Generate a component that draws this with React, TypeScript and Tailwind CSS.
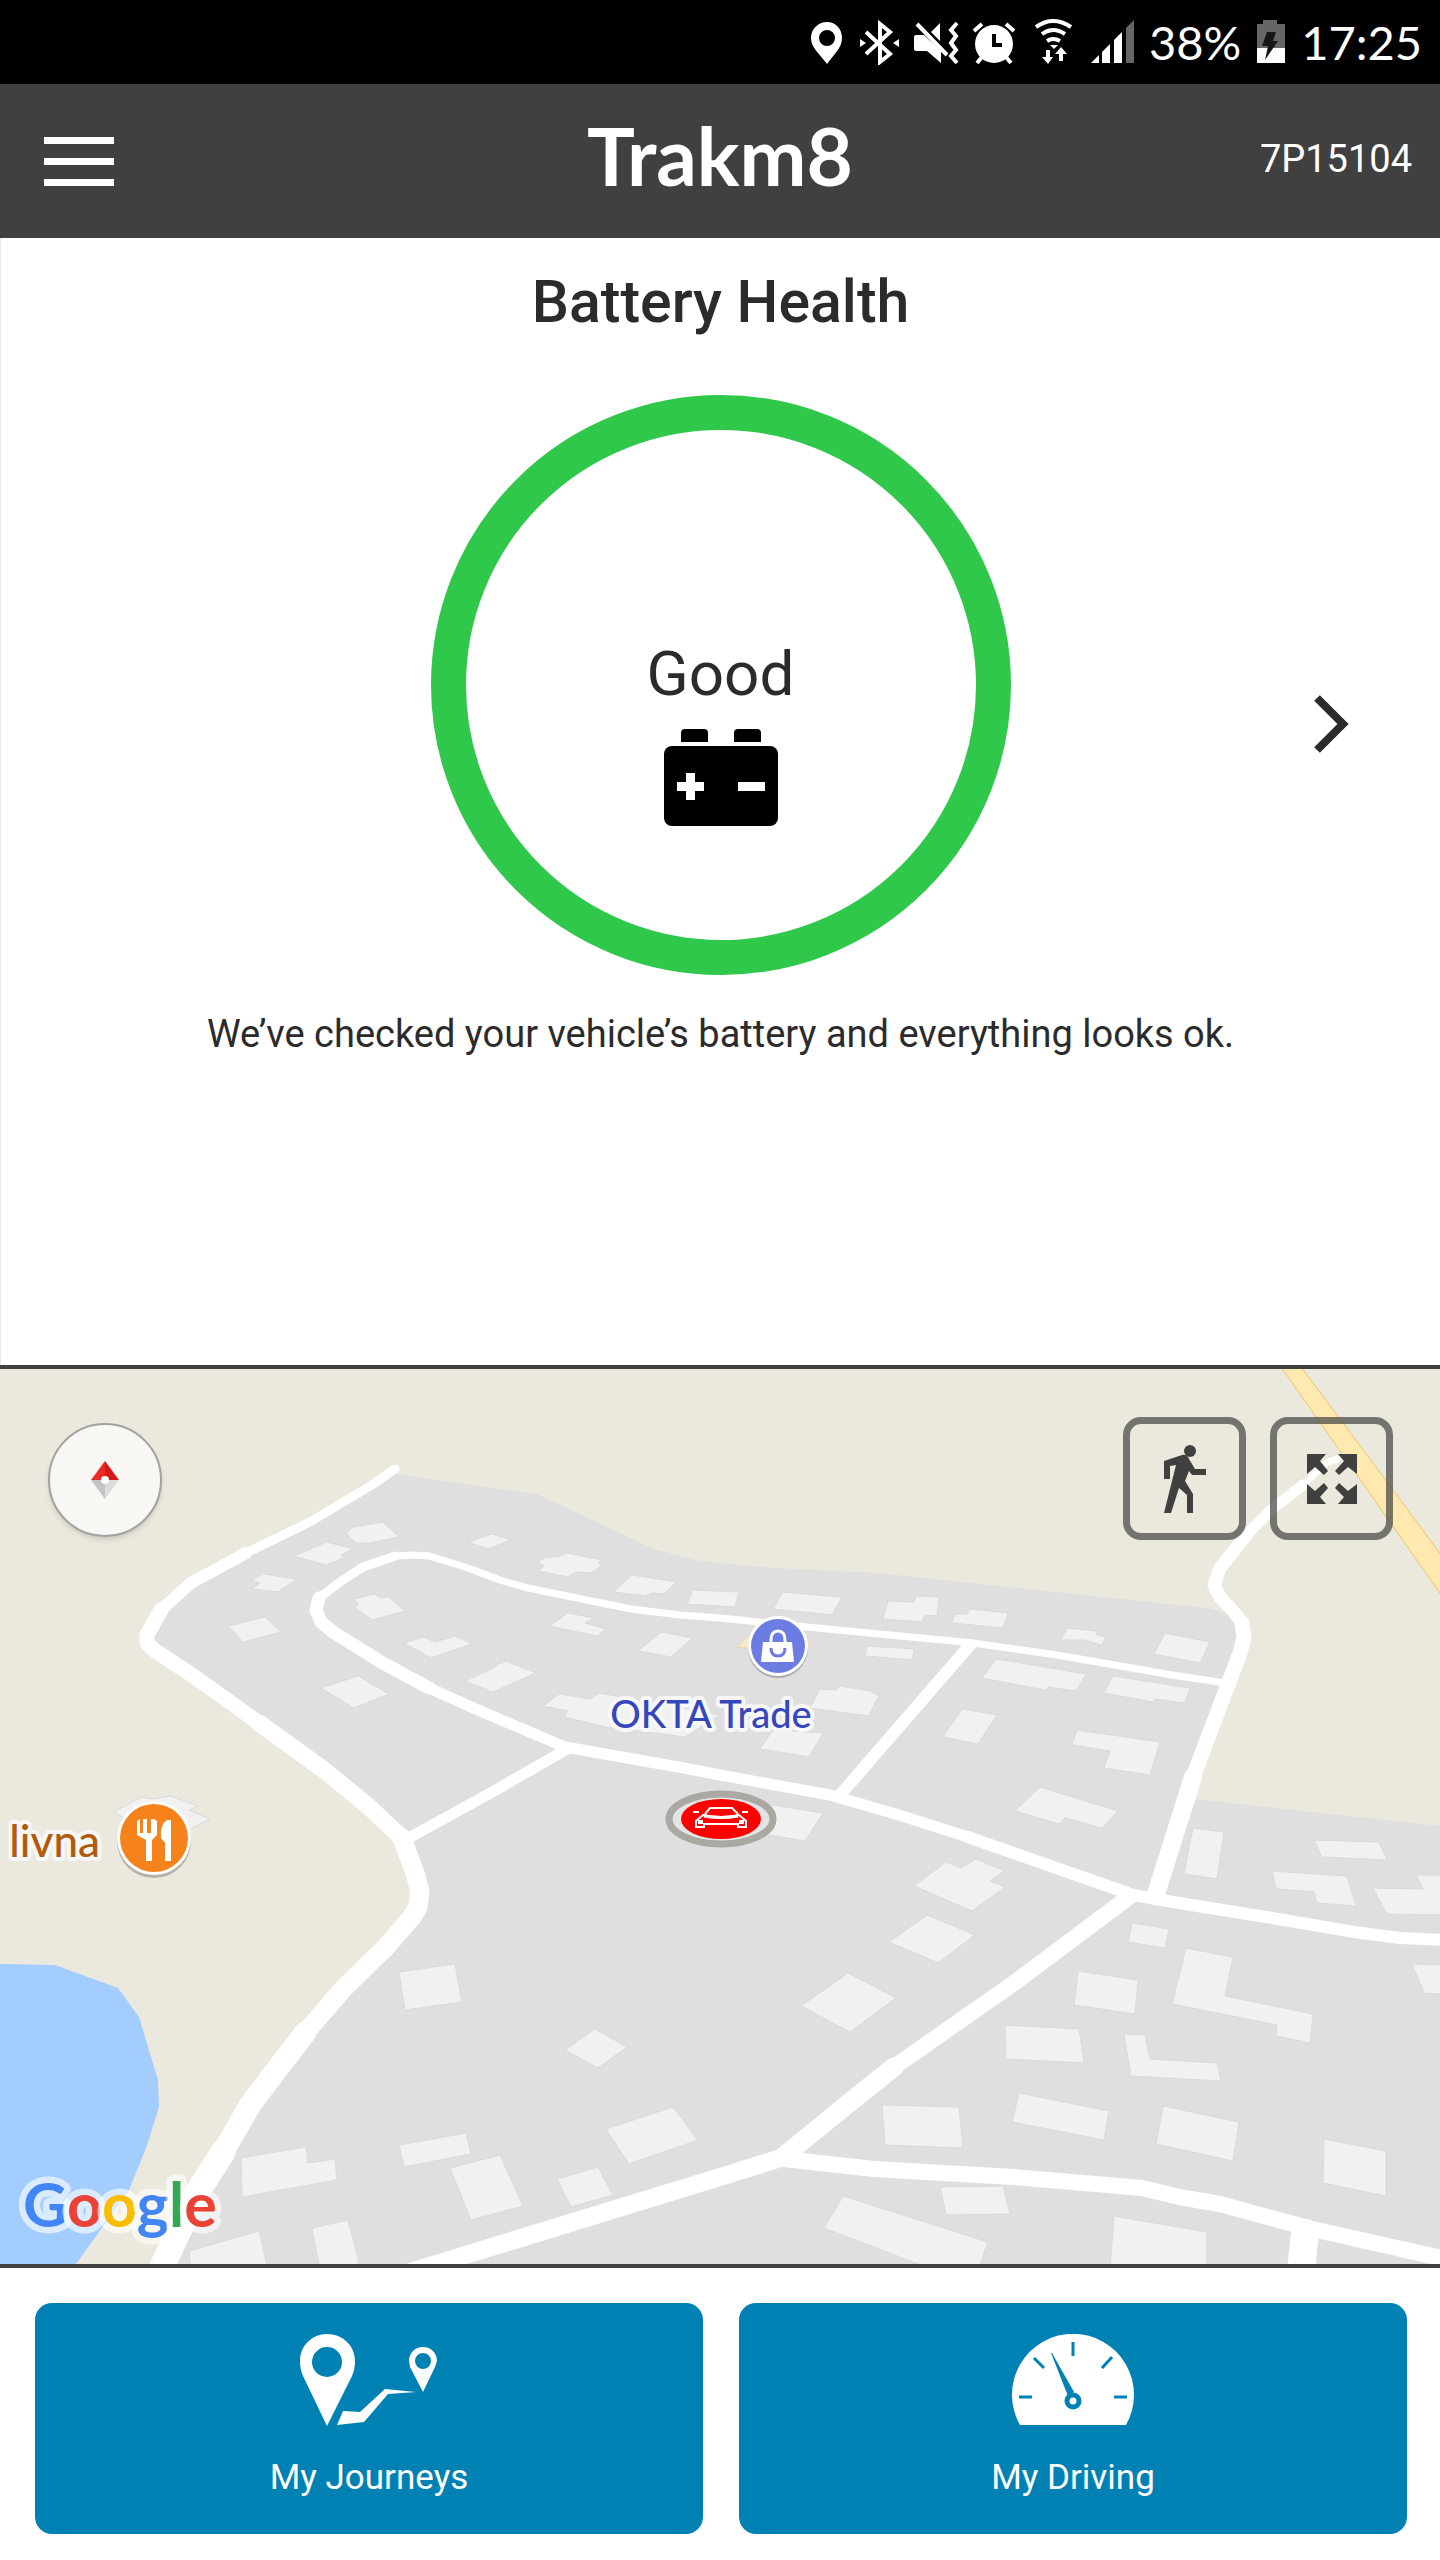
import type { ReactNode } from "react";

/* ── Map data ── */
const LAND =
  "395,1474 537,1494 654,1549 700,1561 720,1563 775,1568 878,1573 1207,1608 1230,1614 1244,1637 1229,1685 1195,1799 1440,1826 1440,2270 161,2270 197,2193 223,2152 250,2105 275,2072 305,2033 344,1988 386,1947 412,1917 420,1892 415,1873 402,1838 367,1805 324,1770 259,1723 195,1677 154,1650 147,1635 161,1610 191,1583 246,1553 310,1522 372,1485";

const LAKE =
  "0,1964 55,1965 118,1988 139,2017 158,2080 159,2107 146,2148 129,2190 99,2232 76,2264 76,2270 0,2270";

const BUILDINGS = [
  "346,1533 353,1527 383,1522 399,1537 370,1543 356,1543",
  "294,1556 327,1542 353,1549 341,1555 345,1557 326,1565",
  "252,1580 263,1574 297,1579 278,1592 252,1589 260,1583",
  "228,1626 265,1617 281,1632 243,1642",
  "354,1599 374,1594 381,1598 389,1597 405,1611 372,1620 354,1607 359,1605",
  "468,1542 492,1534 511,1540 488,1549",
  "538,1571 544,1566 539,1561 546,1557 558,1557 567,1553 601,1560 598,1563 602,1565 591,1573 576,1572 568,1577",
  "613,1592 632,1575 676,1582 664,1594 652,1593 645,1596",
  "687,1604 693,1590 739,1592 735,1607",
  "549,1626 568,1613 594,1618 585,1623 606,1629 597,1636",
  "638,1651 661,1632 692,1638 671,1657",
  "404,1643 423,1637 435,1642 455,1636 472,1644 431,1658",
  "465,1681 497,1666 497,1665 506,1661 536,1673 493,1692",
  "321,1688 358,1676 389,1694 354,1708",
  "543,1706 559,1694 590,1699 599,1693 640,1700 720,1715 685,1737 606,1727 564,1717 568,1711",
  "760,1749 773,1730 823,1733 809,1757",
  "114,1812 141,1797 152,1799 171,1796 198,1806 189,1810 210,1819 190,1829 160,1840",
  "783,1592 842,1597 832,1615 773,1609",
  "888,1601 914,1602 916,1596 939,1597 937,1616 925,1615 922,1622 883,1619",
  "955,1614 967,1614 970,1609 1008,1613 1003,1628 952,1623",
  "1067,1628 1096,1631 1097,1635 1106,1637 1102,1645 1084,1640 1061,1640",
  "1165,1633 1210,1642 1200,1663 1154,1654",
  "867,1646 914,1649 912,1660 865,1656",
  "996,1659 1086,1674 1076,1691 1048,1687 1045,1690 982,1678",
  "1113,1676 1190,1688 1185,1703 1155,1699 1153,1702 1104,1693",
  "820,1689 836,1690 839,1686 870,1691 879,1696 868,1716 810,1708",
  "962,1709 997,1715 978,1744 943,1737",
  "1077,1730 1160,1742 1150,1775 1104,1768 1110,1751 1072,1745",
  "1040,1787 1118,1811 1102,1828 1065,1818 1059,1824 1015,1811",
  "766,1804 823,1813 805,1841 768,1835",
  "1193,1828 1224,1832 1217,1879 1184,1874",
  "1314,1840 1379,1842 1387,1860 1322,1857",
  "1272,1871 1347,1876 1356,1906 1317,1903 1314,1892 1276,1889",
  "1373,1888 1423,1889 1416,1875 1441,1875 1441,1915 1387,1914",
  "914,1886 946,1862 961,1868 976,1859 1004,1871 990,1881 1005,1887 972,1911",
  "927,1915 975,1935 938,1963 889,1942",
  "848,1973 896,1998 850,2032 801,2006",
  "1132,1923 1169,1929 1165,1948 1128,1942",
  "1186,1948 1233,1957 1225,1996 1313,2014 1310,2043 1276,2036 1277,2025 1172,2004",
  "1078,1971 1138,1980 1135,2014 1074,2005",
  "1412,1964 1441,1965 1441,1994 1424,1993",
  "1005,2025 1079,2029 1084,2063 1006,2059",
  "1124,2034 1145,2035 1150,2059 1217,2063 1221,2081 1131,2076",
  "882,2105 959,2107 963,2148 885,2145",
  "1019,2093 1109,2111 1104,2140 1012,2122",
  "1163,2106 1239,2122 1233,2161 1156,2144",
  "1324,2139 1386,2151 1386,2196 1323,2183",
  "940,2187 1003,2186 1010,2214 946,2215",
  "843,2196 988,2242 978,2270 934,2270 824,2228",
  "1114,2216 1207,2232 1207,2270 1110,2270",
  "399,1972 455,1964 462,2002 405,2010",
  "595,2029 627,2047 598,2068 565,2050",
  "606,2129 673,2107 698,2140 629,2164",
  "399,2145 466,2133 471,2154 404,2167",
  "450,2168 500,2155 523,2206 471,2220",
  "557,2179 598,2167 613,2195 571,2207",
  "241,2158 306,2147 308,2163 335,2159 337,2180 242,2197",
  "189,2251 259,2231 268,2270 191,2270",
  "312,2228 348,2220 359,2262 350,2270 320,2270",
];

// roads get wider towards the viewer
const ROADS: { width: number; points: string }[] = [
  { width: 9, points: "395,1469 372,1485 310,1522 246,1553" },
  { width: 12, points: "246,1553 191,1583 161,1610" },
  { width: 15, points: "161,1610 147,1635 147,1643 154,1650 195,1677 259,1723" },
  { width: 17, points: "259,1723 324,1770 367,1805 402,1838" },
  { width: 19, points: "402,1838 415,1873 420,1892 418,1907 412,1917 386,1947 344,1988 305,2033" },
  { width: 22, points: "305,2033 275,2072 250,2105 223,2152" },
  { width: 25, points: "223,2152 197,2193 158,2275" },
  { width: 7, points: "1225,1683 1172,1675 1057,1655 973,1643 807,1627 720,1618 680,1615 631,1609 528,1588 500,1580 468,1568 429,1556 413,1555 395,1556" },
  { width: 9, points: "395,1556 363,1567 340,1582 319,1598" },
  { width: 13, points: "319,1598 316,1610 321,1622 333,1632 381,1662 429,1688" },
  { width: 11, points: "429,1688 478,1710 565,1747 684,1768 720,1775 830,1795 899,1815 968,1837" },
  { width: 12, points: "968,1837 1119,1890 1133,1895 1179,1903 1266,1917 1354,1932 1400,1938 1445,1940" },
  { width: 11, points: "569,1748 487,1795 405,1840" },
  { width: 12, points: "970,1645 840,1795" },
  { width: 7, points: "1337,1459 1326,1463 1303,1485" },
  { width: 11, points: "1303,1485 1271,1510 1248,1533" },
  { width: 13, points: "1248,1533 1220,1568 1214,1585 1220,1597 1234,1612 1242,1623" },
  { width: 15, points: "1242,1623 1244,1637 1240,1653 1228,1685 1193,1777" },
  { width: 18, points: "1193,1777 1174,1837 1156,1894" },
  { width: 16, points: "1129,1897 1014,1983 894,2067" },
  { width: 19, points: "894,2067 849,2103 784,2156" },
  { width: 18, points: "784,2157 720,2177 410,2272" },
  { width: 16, points: "784,2159 874,2169 1014,2177 1142,2188 1179,2197 1220,2204 1308,2228 1450,2260" },
  { width: 28, points: "1305,2233 1300,2280" },
];

const GOOGLE: [string, string][] = [
  ["G", "#4285f4"],
  ["o", "#ea4335"],
  ["o", "#fbbc05"],
  ["g", "#4285f4"],
  ["l", "#34a853"],
  ["e", "#ea4335"],
];

/* ── Status bar ── */
function StatusBar() {
  return (
    <div className="flex h-[84px] items-center justify-end gap-3 bg-black pr-[18px] font-['Lato',sans-serif] text-[47px] leading-none text-white">
      <svg className="h-[46px] w-9" viewBox="810 19 36 46" fill="currentColor" aria-label="Location">
        <path fillRule="evenodd" d="M828 22c-9 0-16 7-16 16 0 10 9 16 16 26 7-10 15-16 15-26 0-9-6-16-15-16zm0 8a8 8 0 1 1 0 16 8 8 0 0 1 0-16z" />
      </svg>
      <svg className="h-[46px] w-11" viewBox="858 19 44 46" fill="none" stroke="currentColor" strokeWidth="4" aria-label="Bluetooth">
        <path d="M867 32 891 54 881 62V24L891 32 867 54" />
        <path d="M861 39l6 4-6 4zM900 39l-6 4 6 4z" fill="currentColor" stroke="none" />
      </svg>
      <svg className="h-[46px] w-[46px]" viewBox="914 19 46 46" fill="currentColor" aria-label="Muted">
        <path d="M917 35h8l17 16v12l-14-12h-11q-2 0-2-2V37q0-2 2-2zM941 23v18l-9-9z" />
        <path d="M918 24 948 55" stroke="currentColor" strokeWidth="4" />
        <path d="M958 23l-6 7 5 6-5 7 5 7-5 6 6 7" fill="none" stroke="currentColor" strokeWidth="4" />
      </svg>
      <svg className="h-[46px] w-[46px]" viewBox="972 19 46 46" aria-label="Alarm">
        <circle cx="995" cy="44" r="19" fill="currentColor" />
        <path d="M975 31l8-7M1015 31l-8-7M983 57l-5 6M1007 57l5 6" stroke="currentColor" strokeWidth="4" />
        <path d="M995 34v11h8" fill="none" stroke="black" strokeWidth="4" />
      </svg>
      <svg className="h-[46px] w-12" viewBox="1034 19 48 46" fill="none" stroke="currentColor" strokeWidth="4" aria-label="Wi-Fi">
        <path d="M1041 27q17-12 35 0M1047 34q11-8 23 0M1052 41q6-4 13 0" />
        <path d="M1055 45l4 4 4-4z" fill="currentColor" stroke="none" />
        <path d="M1053 50v10M1066 61V51" />
        <path d="M1047 57h11l-5 7zM1060 54h12l-6-7z" fill="currentColor" stroke="none" />
      </svg>
      <svg className="h-[46px] w-12" viewBox="1089 19 48 46" fill="currentColor" aria-label="Signal">
        <path d="M1091 63l8-8v8zM1102 52l8-8v19h-8zM1114 40l8-8v31h-8z" />
        <path d="M1126 28l8-8v43h-8z" fill="#666" />
      </svg>
      <span>38%</span>
      <svg className="mx-1 h-[46px] w-7" viewBox="1261 19 28 46" aria-label="Charging">
        <path d="M1267 20h14v4h8v25h-28V24h6z" fill="#666" />
        <path d="M1261 48h28v15h-28z" fill="white" />
        <path d="M1271 32h9l-3 9h5l-13 19 3-14h-6z" fill="#161616" />
      </svg>
      <span>17:25</span>
    </div>
  );
}

function Header() {
  return (
    <header className="grid h-[154px] grid-cols-[1fr_auto_1fr] items-center bg-[#404040] px-7 text-white">
      <button type="button" aria-label="Menu" className="ml-4 flex w-[70px] flex-col gap-[14px]">
        <span className="h-[7px] bg-white" />
        <span className="h-[7px] bg-white" />
        <span className="h-[7px] bg-white" />
      </button>
      <div className="pb-3 font-['Lato',sans-serif] text-[80px] leading-none font-bold">Trakm8</div>
      <div className="pb-1 text-right text-[38px] leading-none">7P15104</div>
    </header>
  );
}

/* ── Battery health ── */
function BatteryIcon() {
  return (
    <svg className="h-[98px] w-[114px]" viewBox="663 729 114 98" aria-hidden="true">
      <path d="M680 743v-9q0-4 4-4h19q4 0 4 4v9zM733 743v-9q0-4 4-4h19q4 0 4 4v9z" />
      <rect x="663" y="747" width="114" height="80" rx="8" />
      <path d="M676 783h9v-9h9v9h9v9h-9v9h-9v-9h-9zM737 783h27v9h-27z" fill="white" />
    </svg>
  );
}

function BatteryHealth() {
  return (
    <section className="flex flex-1 flex-col items-center border-l border-[#e8e8e8] pt-7 pb-10 text-center text-[#2b2b2b]">
      <h1 className="text-[59px] leading-[72px] font-medium">Battery Health</h1>
      <div className="mt-[57px] grid w-full grid-cols-[1fr_auto_1fr]">
        <div />
        <div className="flex size-[580px] flex-col items-center rounded-full border-[35px] border-[#30c84b] pt-[208px]">
          <p className="text-[62px] leading-[72px]">Good</p>
          <div className="mt-[18px]">
            <BatteryIcon />
          </div>
        </div>
        <div className="flex items-center justify-end pt-[78px] pr-[91px]">
          <button type="button" aria-label="Next">
            <svg className="h-[60px] w-9" viewBox="0 0 36 60" fill="none" stroke="currentColor" strokeWidth="8">
              <path d="M4 4 30 30 4 56" />
            </svg>
          </button>
        </div>
      </div>
      <p className="mt-[35px] text-[38px] leading-[48px]">
        We’ve checked your vehicle’s battery and everything looks ok.
      </p>
    </section>
  );
}

/* ── Map ── */
function MapCanvas() {
  return (
    <svg className="h-full w-full" viewBox="0 1369 1440 895" preserveAspectRatio="xMidYMid slice">
      <rect y="1369" width="1440" height="895" fill="#ebe9dd" />
      <polygon points={LAKE} fill="#a3ccff" />
      <polygon points={LAND} fill="#dfdfdf" />
      <polygon points="1281,1367 1301,1367 1364,1451 1442,1556 1442,1596 1345,1458" fill="#ffe9af" stroke="#e8c76c" />
      <g fill="#f1f1f1" stroke="#dadada">
        {BUILDINGS.map((points) => (
          <polygon key={points} points={points} />
        ))}
      </g>
      <polygon points="737,1647 748,1636 800,1636 811,1644 800,1652" fill="#fae8cc" stroke="#f0d5a6" />
      <g fill="none" stroke="white" strokeLinejoin="round" strokeLinecap="round">
        {ROADS.map((road) => (
          <polyline key={road.points} points={road.points} strokeWidth={road.width} />
        ))}
      </g>

      {/* Shop */}
      <circle cx="778" cy="1648" r="30" fill="#a9a9a9" />
      <circle cx="778" cy="1646" r="30" fill="white" />
      <circle cx="778" cy="1646" r="27" fill="#6c7ce3" />
      <path d="M763 1642h29l2 20h-33z" fill="white" />
      <path d="M771 1644v-4q0-9 7-9t7 9v4" fill="none" stroke="white" strokeWidth="3" />
      <path d="M771 1648q0 8 7 8t7-8" fill="none" stroke="#6c7ce3" strokeWidth="3" />

      {/* Restaurant */}
      <circle cx="154" cy="1841" r="37" fill="#b3b1aa" />
      <circle cx="154" cy="1838" r="37" fill="white" />
      <circle cx="154" cy="1838" r="34" fill="#f5821b" />
      <path d="M137 1821l3-2v14h3v-14h4v14h4v-14l3 0v0l3 2v14l-5 5v21h-6v-21l-9-5zM171 1861h-6v-18l-4-5q-1-14 6-18h4z" fill="white" />

      {/* Labels */}
      <g className="font-['Lato',sans-serif] font-medium" stroke="#f7f7f7" strokeWidth="8" strokeLinejoin="round" paintOrder="stroke">
        <text x="711" y="1728" fontSize="38" textAnchor="middle" fill="#3547bb">
          OKTA Trade
        </text>
        <text x="100" y="1857" fontSize="44" textAnchor="end" fill="#b25a0c">
          livna
        </text>
      </g>
      <text
        x="23"
        y="2227"
        fontSize="61"
        className="font-['Lato',sans-serif] font-bold"
        stroke="white"
        strokeOpacity="0.6"
        strokeWidth="13"
        strokeLinejoin="round"
        paintOrder="stroke"
      >
        {GOOGLE.map(([letter, color], i) => (
          <tspan key={i} fill={color}>
            {letter}
          </tspan>
        ))}
      </text>

      {/* Vehicle */}
      <ellipse cx="721" cy="1819" rx="52" ry="25" fill="#e4e4e4" stroke="#a9a8a3" strokeWidth="7" />
      <ellipse cx="721" cy="1819" rx="40" ry="20" fill="#ff0000" />
      <g fill="none" stroke="white" strokeWidth="2">
        <path d="M705 1814l5-6h22l6 6" />
        <path d="M693 1812h6M742 1812h6" />
        <path d="M703 1815q18 4 36 0l7 6v6h-8v-3h-34v3h-8v-6z" />
        <path d="M704 1816q17 3 34 0" strokeWidth="3" />
        <path d="M698 1822h5M739 1822h5" strokeWidth="4" />
      </g>
    </svg>
  );
}

function MapButton({ label, children }: { label: string; children: ReactNode }) {
  return (
    <button
      type="button"
      aria-label={label}
      className="flex size-[123px] items-center justify-center rounded-[18px] border-[7px] border-[#404040]/70"
    >
      {children}
    </button>
  );
}

function VehicleMap() {
  return (
    <section className="relative h-[903px] overflow-hidden border-y-4 border-[#404040]">
      <MapCanvas />
      <button
        type="button"
        aria-label="Compass"
        className="absolute top-[54px] left-12 flex size-[114px] items-center justify-center rounded-full border-2 border-[#a2a2a0] bg-[#f8f7f3] shadow-md"
      >
        <svg className="h-[38px] w-7" viewBox="0 0 28 38">
          <path d="M14 0v19H0z" fill="#ea2a24" />
          <path d="M14 0v19h14z" fill="#d41a16" />
          <path d="M14 38V19H0z" fill="#c4c4c4" />
          <path d="M14 38V19h14z" fill="#dcdcdc" />
          <circle cx="14" cy="19" r="4" fill="white" />
        </svg>
      </button>
      <div className="absolute top-12 right-[47px] flex gap-6 text-[#404040]">
        <MapButton label="Walk to vehicle">
          <svg className="h-[70px] w-[42px]" viewBox="0 0 42 70" fill="currentColor">
            <circle cx="26" cy="7" r="6" />
            <path d="M0 17 18 11q5-1 7 4l6 10h11v6H28l-3-4-4 10 8 13v19h-6V51l-8-7L7 69H0l12-48-6 1v13H0z" />
          </svg>
        </MapButton>
        <MapButton label="Full screen">
          <svg className="size-[50px]" viewBox="0 0 50 50" fill="currentColor">
            <path d="M0 0h19l-6 7 8 10-4 4-9-8-8 7zM50 0H31l6 7-9 10 4 4 9-8 9 7zM0 50h19l-6-7 8-9-4-5-9 8-8-7zM50 50H31l6-7-9-9 4-5 9 8 9-7z" />
          </svg>
        </MapButton>
      </div>
    </section>
  );
}

/* ── Bottom tiles ── */
function Tile({ label, children }: { label: string; children: ReactNode }) {
  return (
    <button
      type="button"
      className="flex h-[231px] flex-1 flex-col items-center rounded-[17px] bg-[#0081b4] pt-[31px] text-white"
    >
      {children}
      <span className="mt-8 text-[35px] leading-10">{label}</span>
    </button>
  );
}

function JourneysIcon() {
  return (
    <svg className="h-[92px] w-[138px]" viewBox="301 2334 138 92" fill="currentColor" aria-hidden="true">
      <path
        fillRule="evenodd"
        d="M328 2334c-15 0-27 12-27 27 0 6 1 10 3 15l24 50 25-50c2-5 3-9 3-15 0-15-12-27-28-27zm0 13a15 15 0 1 1 0 30 15 15 0 0 1 0-30z"
      />
      <path
        fillRule="evenodd"
        d="M424 2347c-8 0-14 6-14 14l1 6 13 25 12-25 2-6c0-8-6-14-14-14zm0 6a8 8 0 1 1 0 16 8 8 0 0 1 0-16z"
      />
      <path d="M344 2411l17 1 25-23 31 3-28 2-24 28-27 3z" />
    </svg>
  );
}

function GaugeIcon() {
  return (
    <svg className="h-[92px] w-[122px]" viewBox="1012 2334 122 92" aria-hidden="true">
      <path d="M1020 2425a61 61 0 1 1 106 0z" fill="white" />
      <g fill="none" stroke="#0081b4" strokeWidth="3">
        <path d="M1073 2342v14M1034 2358l10 10M1112 2357l-10 11M1019 2397h13M1114 2397h13" />
      </g>
      <path d="M1051 2353l1 0 22 39-6 4z" fill="#0081b4" />
      <circle cx="1073" cy="2401" r="6" fill="white" stroke="#0081b4" strokeWidth="5" />
    </svg>
  );
}

export default function App() {
  return (
    <div className="flex min-h-screen flex-col bg-white font-['Roboto',sans-serif]">
      <StatusBar />
      <Header />
      <BatteryHealth />
      <VehicleMap />
      <nav className="flex gap-9 pt-[35px] pr-[33px] pb-[26px] pl-[35px]">
        <Tile label="My Journeys">
          <JourneysIcon />
        </Tile>
        <Tile label="My Driving">
          <GaugeIcon />
        </Tile>
      </nav>
    </div>
  );
}
